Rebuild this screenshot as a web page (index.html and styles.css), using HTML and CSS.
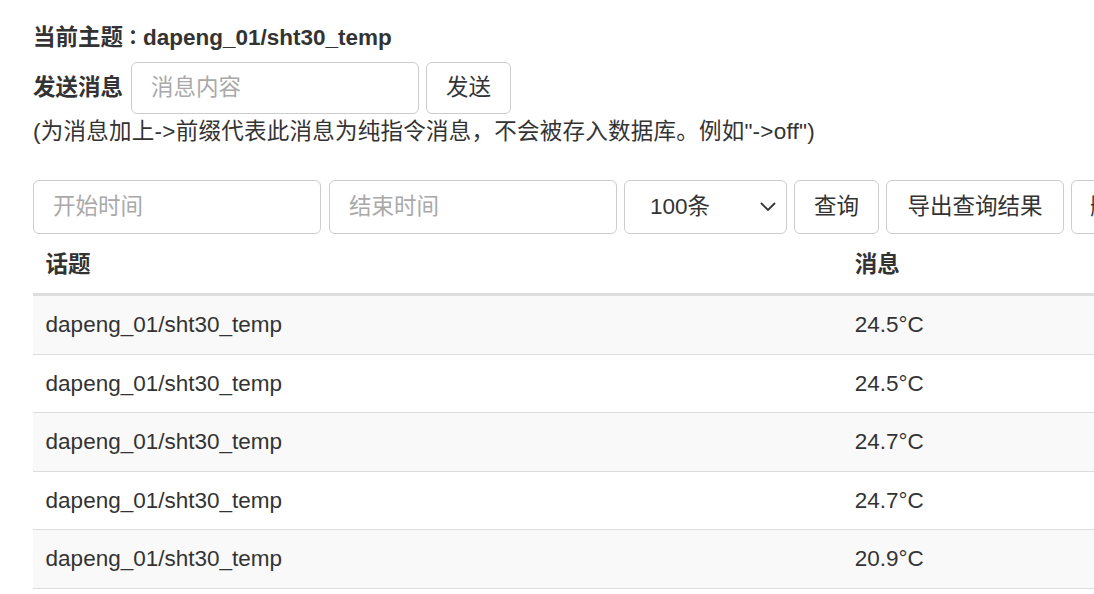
FILE: index.html
```html
<!DOCTYPE html>
<html lang="zh-CN">
<head>
<meta charset="utf-8">
<title>主题消息</title>
<link rel="stylesheet" href="styles.css">
</head>
<body>
<div class="page">
  <h4 class="topic">当前主题<span class="colon" lang="zh-TW">：</span>dapeng_01/sht30_temp</h4>
  <div class="send-row">
    <label class="send-label">发送消息</label>
    <input class="field field-msg" type="text" placeholder="消息内容">
    <button class="btn btn-send" type="button">发送</button>
  </div>
  <p class="note">(为消息加上-&gt;前缀代表此消息为纯指令消息，不会被存入数据库。例如"-&gt;off")</p>

  <div class="query-row">
    <input class="field field-time" type="text" placeholder="开始时间">
    <input class="field field-time" type="text" placeholder="结束时间">
    <span class="select-wrap">
      <select class="field field-select">
        <option>100条</option>
        <option>200条</option>
        <option>500条</option>
      </select>
      <svg class="chevron" width="18" height="12" viewBox="0 0 18 12"><path d="M2 2 L9 9 L16 2" fill="none" stroke="#333" stroke-width="1.8"/></svg>
    </span>
    <button class="btn btn-query" type="button">查询</button>
    <button class="btn btn-export" type="button">导出查询结果</button>
    <button class="btn btn-clear" type="button">删除数据</button>
  </div>

  <table class="data-table">
    <thead>
      <tr><th class="col-topic">话题</th><th>消息</th></tr>
    </thead>
    <tbody>
      <tr><td>dapeng_01/sht30_temp</td><td>24.5°C</td></tr>
      <tr><td>dapeng_01/sht30_temp</td><td>24.5°C</td></tr>
      <tr><td>dapeng_01/sht30_temp</td><td>24.7°C</td></tr>
      <tr><td>dapeng_01/sht30_temp</td><td>24.7°C</td></tr>
      <tr><td>dapeng_01/sht30_temp</td><td>20.9°C</td></tr>
    </tbody>
  </table>
</div>
</body>
</html>
```

FILE: styles.css
```css
html, body {
  margin: 0;
  padding: 0;
  overflow: hidden;
  background: #fff;
}

body {
  font-family: "Liberation Sans", "Noto Sans CJK SC", sans-serif;
  font-size: 22.5px;
  line-height: 31.5px;
  color: #333;
}

.page {
  padding: 21px 0 0 33px;
  width: 1400px;
}

.topic {
  margin: 0;
  font-size: 22.5px;
  font-weight: bold;
  line-height: 31.5px;
}

.colon {
  font-family: "Noto Sans CJK TC", sans-serif;
  font-size: 20px;
}

.send-row {
  display: flex;
  align-items: center;
  gap: 7px;
  margin-top: 8px;
}

.send-label {
  font-weight: bold;
  margin-right: 1px;
}

.field {
  box-sizing: border-box;
  height: 53px;
  border: 1px solid #ccc;
  border-radius: 6px;
  padding: 0 19px;
  font-family: inherit;
  font-size: 22.5px;
  color: #555;
  background: #fff;
  outline: none;
}

.field::placeholder {
  color: #a9a9a9;
}

.field-msg {
  width: 288px;
  height: 52px;
}

.btn {
  box-sizing: border-box;
  height: 53px;
  border: 1px solid #ccc;
  border-radius: 6px;
  background: #fff;
  color: #333;
  font-family: inherit;
  font-size: 22.5px;
  line-height: 28px;
  padding: 0 18px;
  cursor: pointer;
}

.btn-send {
  width: 85px;
  height: 52px;
  padding: 0;
}

.note {
  margin: 2px 0 0 0;
  line-height: 31px;
  letter-spacing: 0.25px;
}

.query-row {
  display: flex;
  align-items: center;
  gap: 7px;
  margin-top: 33px;
}

.query-row .field,
.query-row .btn {
  height: 54px;
}

.field-time {
  width: 288px;
}

.query-row .field-time + .field-time {
  margin-left: 1px;
}

.select-wrap {
  position: relative;
  display: inline-block;
}

.field-select {
  width: 163px;
  appearance: none;
  -webkit-appearance: none;
  padding-left: 25px;
  color: #333;
}

.chevron {
  position: absolute;
  right: 10px;
  top: 21px;
  pointer-events: none;
}

.btn-query {
  width: 85px;
  padding: 0;
}

.btn-export {
  width: 178px;
  padding: 0;
}

.btn-clear {
  width: 160px;
  padding: 0 18px;
  text-align: left;
}

.data-table {
  border-collapse: collapse;
  border-spacing: 0;
  width: 1300px;
  margin-top: 2px;
}

.data-table th,
.data-table td {
  text-align: left;
  padding: 13px 12.6px;
  line-height: 31.5px;
  vertical-align: top;
}

.data-table th {
  font-weight: bold;
  border-bottom: 3px solid #ddd;
}

.col-topic {
  width: 784px;
}

.data-table td {
  border-bottom: 1px solid #ddd;
}

.data-table tbody tr:nth-child(odd) td {
  background: #f9f9f9;
}
```
